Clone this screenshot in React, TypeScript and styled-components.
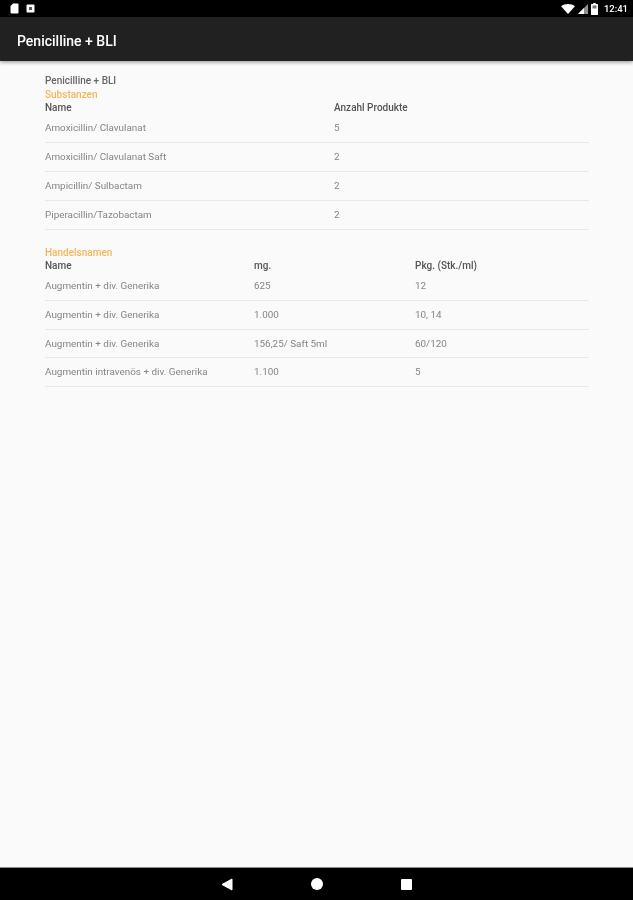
import React from "react";
import styled, { createGlobalStyle } from "styled-components";

const GlobalStyle = createGlobalStyle`
  html, body {
    margin: 0;
    padding: 0;
    background: #fafafa;
    font-family: Roboto, "Liberation Sans", sans-serif;
  }
`;

const Screen = styled.div`
  width: 633px;
  height: 900px;
  display: flex;
  flex-direction: column;
  overflow: hidden;
  background: #fafafa;
  /* the reference is an upscaled capture, everything is slightly soft */
  filter: blur(0.45px);
`;

const StatusBar = styled.div`
  height: 17px;
  flex: none;
  background: #000;
  display: flex;
  align-items: center;
  justify-content: space-between;
  padding: 0 5px 0 10px;
`;

const StatusGroup = styled.div`
  display: flex;
  align-items: center;
  gap: ${(p: { $gap: number }) => p.$gap}px;
`;

const Clock = styled.span`
  color: #fff;
  font-size: 9.5px;
  font-weight: 500;
  margin-left: 3px;
`;

const AppBar = styled.header`
  height: 44px;
  flex: none;
  box-sizing: border-box;
  background: #212121;
  box-shadow: 0 1px 4px rgba(0, 0, 0, 0.45);
  display: flex;
  align-items: center;
  padding: 3px 0 0 17px;
  position: relative;
`;

const AppTitle = styled.h1`
  margin: 0;
  color: #fff;
  font-size: 14px;
  font-weight: 500;
`;

const Content = styled.main`
  flex: 1;
  padding: 13px 44px 0 45px;
`;

const PageTitle = styled.div`
  font-size: 10px;
  line-height: 13px;
  height: 13px;
  font-weight: 500;
  color: #666;
`;

const SectionTitle = styled.div`
  font-size: 10px;
  line-height: 16px;
  height: 14px;
  font-weight: 500;
  color: #f2b75a;
`;

const Table = styled.div`
  margin-bottom: ${(p: { $gap?: number }) => p.$gap ?? 0}px;
`;

const Row = styled.div<{ $columns: string; $height: number }>`
  display: grid;
  grid-template-columns: ${(p) => p.$columns};
  height: ${(p) => p.$height}px;
  box-sizing: border-box;
`;

const DataRow = styled(Row)`
  border-bottom: 1px solid #e8e8e8;
  align-items: center;
  padding-bottom: 1px;
`;

const HeadCell = styled.div`
  font-size: 10px;
  line-height: 13px;
  font-weight: 500;
  color: #555;
`;

const Cell = styled.div`
  font-size: 9.9px;
  color: #858585;
  white-space: nowrap;
`;

const NavBar = styled.nav`
  height: 33px;
  flex: none;
  background: #000;
  border-top: 1px solid #8c8c8c;
  box-sizing: border-box;
  display: grid;
  grid-template-columns: repeat(3, 90px);
  justify-content: center;
  justify-items: center;
  align-items: center;
`;

const substanceColumns = "289px 1fr";
const tradeColumns = "209px 161px 1fr";

const substances = [
  ["Amoxicillin/ Clavulanat", "5"],
  ["Amoxicillin/ Clavulanat Saft", "2"],
  ["Ampicillin/ Sulbactam", "2"],
  ["Piperacillin/Tazobactam", "2"],
];

const tradeNames = [
  ["Augmentin + div. Generika", "625", "12"],
  ["Augmentin + div. Generika", "1.000", "10, 14"],
  ["Augmentin + div. Generika", "156,25/ Saft 5ml", "60/120"],
  ["Augmentin intravenös + div. Generika", "1.100", "5"],
];

function SdCardIcon() {
  return (
    <svg width="9" height="11" viewBox="0 0 9 11">
      <path d="M3 0.5h4.5a1 1 0 0 1 1 1v8a1 1 0 0 1-1 1h-6a1 1 0 0 1-1-1V3z" fill="#fff" />
    </svg>
  );
}

function PhotoIcon() {
  return (
    <svg width="9" height="9" viewBox="0 0 9 9">
      <rect x="0.5" y="0.5" width="8" height="8" rx="1" fill="#fff" />
      <rect x="3" y="3" width="3" height="3" fill="#555" />
    </svg>
  );
}

function WifiIcon() {
  return (
    <svg width="14" height="10" viewBox="0 0 14 10">
      <path d="M0 2.2C3.8-0.7 10.2-0.7 14 2.2L7 10z" fill="#fff" />
    </svg>
  );
}

function SignalIcon() {
  return (
    <svg width="10" height="10" viewBox="0 0 10 10">
      <path d="M10 0V10H0z" fill="#8f8f8f" />
      <path d="M6 4V10H0z" fill="#fff" />
    </svg>
  );
}

function BatteryIcon() {
  return (
    <svg width="7" height="12" viewBox="0 0 7 12">
      <path d="M2.2 0h2.6v1H6.4a.6.6 0 0 1 .6.6v9.8a.6.6 0 0 1-.6.6H.6a.6.6 0 0 1-.6-.6V1.6A.6.6 0 0 1 .6 1h1.6z" fill="#fff" />
      <rect x="1.5" y="2.5" width="4" height="3" fill="#777" />
    </svg>
  );
}

function BackIcon() {
  return (
    <svg width="12" height="13" viewBox="0 0 12 13">
      <path d="M11 1v11L1 6.5z" fill="#fff" stroke="#fff" strokeLinejoin="round" />
    </svg>
  );
}

function HomeIcon() {
  return (
    <svg width="12" height="12" viewBox="0 0 12 12">
      <circle cx="6" cy="6" r="6" fill="#fff" />
    </svg>
  );
}

function RecentsIcon() {
  return (
    <svg width="11" height="11" viewBox="0 0 11 11">
      <rect width="11" height="11" rx="1" fill="#fff" />
    </svg>
  );
}

export default function App() {
  return (
    <Screen>
      <GlobalStyle />
      <StatusBar>
        <StatusGroup $gap={7}>
          <SdCardIcon />
          <PhotoIcon />
        </StatusGroup>
        <StatusGroup $gap={3}>
          <WifiIcon />
          <SignalIcon />
          <BatteryIcon />
          <Clock>12:41</Clock>
        </StatusGroup>
      </StatusBar>
      <AppBar>
        <AppTitle>Penicilline + BLI</AppTitle>
      </AppBar>
      <Content>
        <PageTitle>Penicilline + BLI</PageTitle>
        <SectionTitle>Substanzen</SectionTitle>
        <Table $gap={15.3}>
          <Row $columns={substanceColumns} $height={13}>
            <HeadCell>Name</HeadCell>
            <HeadCell>Anzahl Produkte</HeadCell>
          </Row>
          {substances.map(([name, count]) => (
            <DataRow key={name} $columns={substanceColumns} $height={29}>
              <Cell>{name}</Cell>
              <Cell>{count}</Cell>
            </DataRow>
          ))}
        </Table>
        <SectionTitle>Handelsnamen</SectionTitle>
        <Table>
          <Row $columns={tradeColumns} $height={13}>
            <HeadCell>Name</HeadCell>
            <HeadCell>mg.</HeadCell>
            <HeadCell>Pkg. (Stk./ml)</HeadCell>
          </Row>
          {tradeNames.map(([name, mg, pkg]) => (
            <DataRow key={mg} $columns={tradeColumns} $height={28.7}>
              <Cell>{name}</Cell>
              <Cell>{mg}</Cell>
              <Cell>{pkg}</Cell>
            </DataRow>
          ))}
        </Table>
      </Content>
      <NavBar>
        <BackIcon />
        <HomeIcon />
        <RecentsIcon />
      </NavBar>
    </Screen>
  );
}
